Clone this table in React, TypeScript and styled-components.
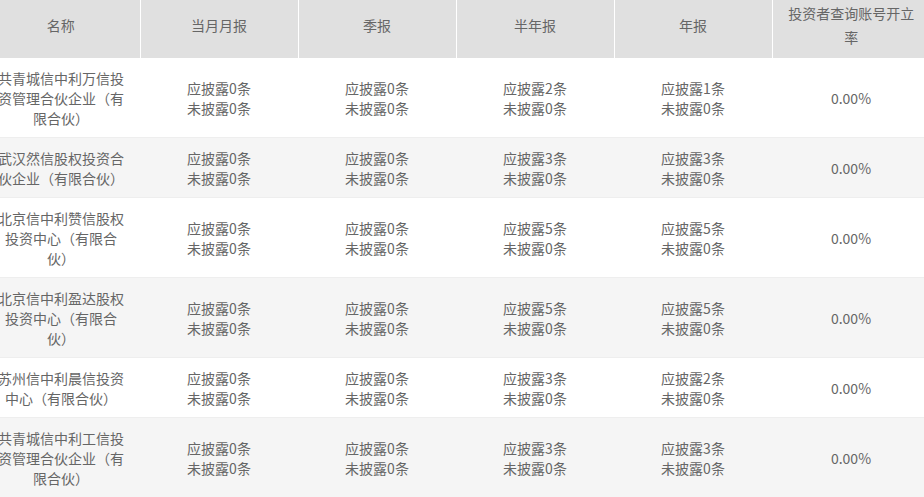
import React from "react";
import styled, { createGlobalStyle } from "styled-components";

const Global = createGlobalStyle`
  html, body { margin: 0; padding: 0; background: #fff; }
  body { font-family: "Noto Sans CJK SC", "Noto Sans", sans-serif; }
`;

const Viewport = styled.div`
  width: 924px;
  height: 497px;
  overflow: hidden;
`;

const Table = styled.table`
  margin-left: -18px;
  width: 948px;
  table-layout: fixed;
  border-collapse: collapse;
  font-size: 14px;
  color: #666;
`;

const HeadCell = styled.th`
  height: 58px;
  box-sizing: border-box;
  padding: 0 10px 8px;
  background: #e0e0e0;
  font-weight: normal;
  line-height: 24px;
  text-align: center;
  vertical-align: middle;
  border-right: 1px solid #fff;
  &:last-child { border-right: none; }
`;

const Row = styled.tr<{ $alt: boolean }>`
  background: ${(p) => (p.$alt ? "#f5f5f5" : "#fff")};
  border-bottom: 1px solid #eeeeee;
`;

const Cell = styled.td`
  padding: 10px 16px 9px;
  line-height: 20px;
  text-align: center;
  vertical-align: middle;
`;

const Line = styled.div`
  white-space: nowrap;
`;

type Rec = { name: string; m: number; q: number; h: number; y: number };

const data: Rec[] = [
  { name: "共青城信中利万信投资管理合伙企业（有限合伙）", m: 0, q: 0, h: 2, y: 1 },
  { name: "武汉然信股权投资合伙企业（有限合伙）", m: 0, q: 0, h: 3, y: 3 },
  { name: "北京信中利赞信股权投资中心（有限合伙）", m: 0, q: 0, h: 5, y: 5 },
  { name: "北京信中利盈达股权投资中心（有限合伙）", m: 0, q: 0, h: 5, y: 5 },
  { name: "苏州信中利晨信投资中心（有限合伙）", m: 0, q: 0, h: 3, y: 2 },
  { name: "共青城信中利工信投资管理合伙企业（有限合伙）", m: 0, q: 0, h: 3, y: 3 },
];

const Disclose = ({ n }: { n: number }) => (
  <Cell>
    <Line>应披露{n}条</Line>
    <Line>未披露0条</Line>
  </Cell>
);

export default function App() {
  return (
    <Viewport>
      <Global />
      <Table>
        <thead>
          <tr>
            <HeadCell>名称</HeadCell>
            <HeadCell>当月月报</HeadCell>
            <HeadCell>季报</HeadCell>
            <HeadCell>半年报</HeadCell>
            <HeadCell>年报</HeadCell>
            <HeadCell>投资者查询账号开立率</HeadCell>
          </tr>
        </thead>
        <tbody>
          {data.map((r, i) => (
            <Row key={i} $alt={i % 2 === 1}>
              <Cell>{r.name}</Cell>
              <Disclose n={r.m} />
              <Disclose n={r.q} />
              <Disclose n={r.h} />
              <Disclose n={r.y} />
              <Cell>0.00%</Cell>
            </Row>
          ))}
        </tbody>
      </Table>
    </Viewport>
  );
}
